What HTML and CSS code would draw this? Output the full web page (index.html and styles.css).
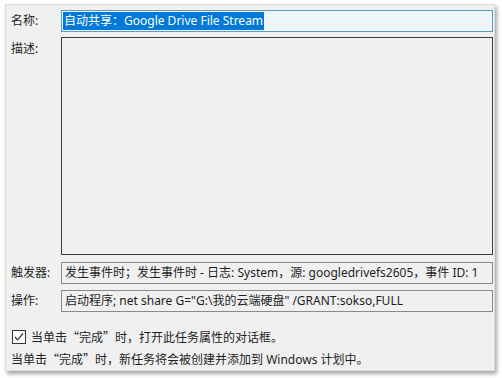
FILE: index.html
```html
<!DOCTYPE html>
<html>
	<head>
		<meta charset="utf-8">
		<title>创建基本任务</title>
		<link rel="stylesheet" href="styles.css">
	</head>
	<body>
		<section class="dialog">
			<div class="row row-name">
				<label>名称:</label>
				<div class="field field-name"><span class="selected">自动共享：Google Drive File Stream</span></div>
			</div>
			<div class="row row-desc">
				<label>描述:</label>
				<div class="field field-desc"></div>
			</div>
			<div class="row row-trigger">
				<label>触发器:</label>
				<div class="field field-ro">发生事件时；发生事件时 - 日志: System，源: googledrivefs2605，事件 ID: 1</div>
			</div>
			<div class="row row-action">
				<label>操作:</label>
				<div class="field field-ro">启动程序; net share G="G:\我的云端硬盘" /GRANT:sokso,FULL</div>
			</div>
			<div class="check">
				<span class="box">
					<svg width="14" height="14" viewBox="0 0 14 14">
						<rect x="0.5" y="0.5" width="13" height="13" fill="#fff" stroke="#333"/>
						<path d="M3 7 L5.5 9.8 L11 3.5" fill="none" stroke="#333" stroke-width="1.2"/>
					</svg>
				</span>
				<span>当单击<span class="cjk">“</span>完成<span class="cjk">”</span>时，打开此任务属性的对话框。</span>
			</div>
			<p class="note">当单击<span class="cjk">“</span>完成<span class="cjk">”</span>时，新任务将会被创建并添加到 Windows 计划中。</p>
		</section>
	</body>
</html>
```

FILE: styles.css
```css
* {
	box-sizing: border-box;
	margin: 0;
	padding: 0;
}
body {
	width: 502px;
	height: 378px;
	background: #fff;
	font-family: "Noto Sans", "Noto Sans CJK SC", sans-serif;
	font-size: 12px;
	color: #1e1e1e;
	overflow: hidden;
}
.cjk {
	font-family: "Noto Sans CJK SC", sans-serif;
}
.dialog {
	width: 490px;
	height: 367px;
	margin: 4px 0 0 5px;
	background: #f0f0f0;
	border: 1px solid #dcdcdc;
	box-shadow: 2px 3px 4px rgba(0, 0, 0, 0.35);
	padding: 5px 1px 0 4px;
	display: flex;
	flex-direction: column;
}
.row {
	display: grid;
	grid-template-columns: 51px 1fr;
	align-items: start;
}
.row label {
	padding-left: 1px;
	line-height: 22px;
}
.field {
	height: 22px;
	line-height: 20px;
	padding: 0 3px;
	white-space: nowrap;
	overflow: hidden;
	background: #f0f0f0;
}
.field-name {
	border: 1px solid #5a9cc8;
	background: #eef5f9;
	padding: 1px 1px;
	line-height: 18px;
}
.selected {
	display: inline-block;
	background: #0078d7;
	color: #fff;
	padding: 0 1px;
	height: 18px;
}
.row-desc {
	margin-top: 5px;
}
.row-desc label {
	line-height: 20px;
	padding-top: 2px;
}
.field-desc {
	height: 218px;
	border: 1px solid #3c3c3c;
}
.row-trigger {
	margin-top: 7px;
}
.row-action {
	margin-top: 6px;
}
.field-ro {
	border: 1px solid #8a8a8a;
}
.check {
	margin-top: 17px;
	display: flex;
	align-items: center;
	gap: 5px;
	padding-left: 2px;
	height: 16px;
}
.box {
	display: flex;
}
.note {
	margin-top: 5px;
	padding-left: 1px;
	line-height: 18px;
}
```
